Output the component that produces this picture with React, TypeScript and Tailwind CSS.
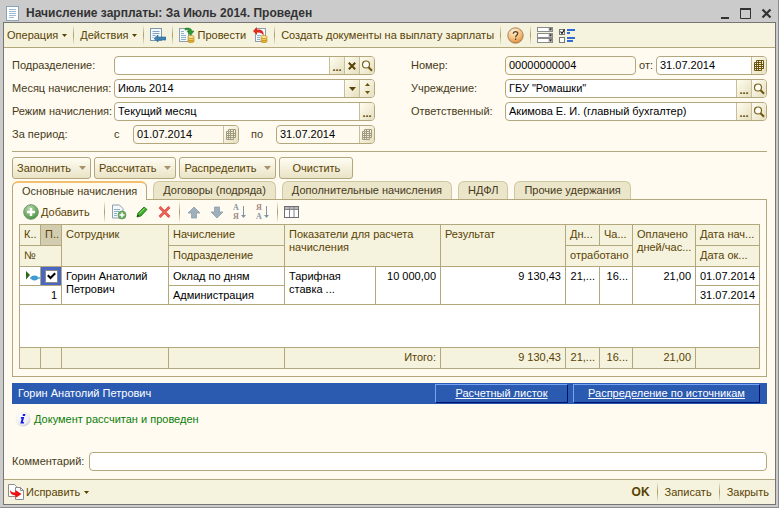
import { ReactNode, useState } from 'react';
import { clsx } from 'clsx';

/* ---------- icons ---------- */

const TitleIcon = () => (
  <svg width="13" height="15" viewBox="0 0 13 15" aria-hidden="true">
    <rect x=".5" y=".5" width="12" height="14" fill="#fff" stroke="#8aa3b5" />
    <path d="M3 3.5h7M3 5.5h7M3 7.5h7M3 9.5h7M3 11.5h5" stroke="#9dbbd3" />
  </svg>
);

const CaretIcon = () => (
  <svg width="5" height="3" viewBox="0 0 5 3" className="ml-0.5" aria-hidden="true">
    <path d="M0 0h5L2.500 3z" fill="#594304" />
  </svg>
);

const DropIcon = ({ light = false }: { light?: boolean }) => (
  <svg width="7" height="4" viewBox="0 0 7 4" aria-hidden="true">
    <path d="M0 0h7L3.500 4z" fill={light ? '#a8926c' : '#594304'} />
  </svg>
);

const GoToIcon = () => (
  <svg width="16" height="16" viewBox="0 0 16 16" aria-hidden="true">
    <rect x=".5" y="1.500" width="11" height="12" fill="#f4f8fb" stroke="#7d97a8" />
    <path d="M2.500 4.500h7M2.500 6.500h7M2.500 8.500h3M2.500 10.500h1" stroke="#7fa5c4" />
    <path d="M4 11.500l4-3.500v2h8v3H8v2z" fill="#3f83b5" stroke="#2b648f" strokeWidth=".6" />
  </svg>
);

const Coins = () => (
  <g stroke="#b07a10" strokeWidth=".6">
    <ellipse cx="12" cy="14" rx="3.200" ry="1.600" fill="#e8b53a" />
    <ellipse cx="12" cy="12" rx="3.200" ry="1.600" fill="#f5cf5e" />
    <ellipse cx="12" cy="10" rx="3.200" ry="1.600" fill="#fde48c" />
  </g>
);

const PostIcon = () => (
  <svg width="16" height="16" viewBox="0 0 16 16" aria-hidden="true">
    <rect x=".5" y="1.500" width="9" height="13" fill="#f4f8fb" stroke="#8aa0ae" />
    <path d="M2 4.500h3M2 6.500h3M2 8.500h5M2 10.500h5M2 12.500h5" stroke="#8fb0ca" />
    <path d="M6 1.500c3-1 6.500-.5 6.800 2.500h2.200l-3.500 4.500L8 4h2.200c-.3-1.300-2-1.600-4.200-1z" fill="#2d9a2d" stroke="#17701b" strokeWidth=".5" />
    <Coins />
  </svg>
);

const UnpostIcon = () => (
  <svg width="16" height="16" viewBox="0 0 16 16" aria-hidden="true">
    <rect x="3.500" y="1.500" width="10" height="13" fill="#f4f8fb" stroke="#8aa0ae" />
    <path d="M5 8.500h4M5 10.500h3M5 12.500h3" stroke="#8fb0ca" />
    <path d="M1 4l4-4v2.500c5-.3 7 1.500 6.500 6.500-.8-2.500-2.500-3.700-6.500-3.500V8z" fill="#e02a1c" />
    <Coins />
  </svg>
);

const HelpIcon = () => (
  <svg width="17" height="17" viewBox="0 0 17 17" aria-hidden="true">
    <defs>
      <radialGradient id="help" cx=".4" cy=".25" r=".8">
        <stop offset="0" stopColor="#fff3dc" />
        <stop offset=".6" stopColor="#f5bd78" />
        <stop offset="1" stopColor="#d98432" />
      </radialGradient>
    </defs>
    <circle cx="8.500" cy="8.500" r="7.700" fill="url(#help)" stroke="#9b7c5a" strokeWidth=".9" />
    <path d="M6.300 6.800c0-2.800 4.500-2.800 4.500-.2 0 1.700-2.200 1.700-2.200 3.600M8.600 11.500v1.500" fill="none" stroke="#5e4326" strokeWidth="1.300" />
  </svg>
);

const FieldsIcon = () => (
  <svg width="16" height="16" viewBox="0 0 16 16" aria-hidden="true">
    {[0, 6, 11].map(y => (
      <g key={y}>
        <rect x=".5" y={y + 0.5} width="15" height="4" fill="#fff" stroke="#8a8a8a" />
        <path d={`M11.500 ${y + 1}h3.500v3h-3.500z`} fill="#b5b5b5" />
        <path d={`M12 ${y + 1.5}h3l-1.500 2z`} fill="#222" />
      </g>
    ))}
  </svg>
);

const SettingsListIcon = () => (
  <svg width="17" height="15" viewBox="0 0 17 15" aria-hidden="true">
    <rect x=".5" y="1.500" width="5" height="5" fill="#fff" stroke="#777" />
    <path d="M1.500 3.500l1.500 2 2.500-4" fill="none" stroke="#111" strokeWidth="1.200" />
    <rect x=".5" y="9.500" width="5" height="5" fill="#fff" stroke="#777" />
    <path d="M8 2h8M8 5h3M8 10h8M8 13h6" stroke="#2f6bd6" strokeWidth="2" />
  </svg>
);

const SearchIcon = () => (
  <svg width="12" height="12" viewBox="0 0 12 12" aria-hidden="true">
    <circle cx="5" cy="4.500" r="3.500" fill="#fffdf5" stroke="#7a6420" strokeWidth="1.200" />
    <path d="M7.500 7.200L11 10.700" stroke="#6b540c" strokeWidth="2" />
  </svg>
);

const ClearIcon = () => (
  <svg width="8" height="8" viewBox="0 0 8 8" aria-hidden="true">
    <path d="M.8.8l6.400 6.400M7.200.8L.8 7.200" stroke="#594304" strokeWidth="2" />
  </svg>
);

const CalendarIcon = ({ muted = false }: { muted?: boolean }) => (
  <svg width="10" height="11" viewBox="0 0 10 11" aria-hidden="true">
    <path d="M2.500.5h7v8h-2v2h-7v-8h2zM2.500 2.500h5v6M.5 4.500h9M.5 6.500h9M.5 8.500h7M2.500 2.500v8M4.500.5v10M7.500.5v8" fill="none" stroke={muted ? '#a09a80' : '#6b540c'} />
  </svg>
);

const SpinIcon = () => (
  <svg width="5" height="11" viewBox="0 0 5 11" aria-hidden="true">
    <path d="M0 3l2.500-3L5 3zM0 8h5l-2.500 3z" fill="#6b540c" />
  </svg>
);

const AddIcon = () => (
  <svg width="16" height="16" viewBox="0 0 16 16" aria-hidden="true">
    <defs>
      <radialGradient id="add" cx=".4" cy=".25" r=".8">
        <stop offset="0" stopColor="#b7d9ad" />
        <stop offset="1" stopColor="#478f3e" />
      </radialGradient>
    </defs>
    <circle cx="8" cy="8" r="7.300" fill="url(#add)" stroke="#72966c" />
    <path d="M8 4v8M4 8h8" stroke="#fff" strokeWidth="2.400" />
  </svg>
);

const CopyRowIcon = () => (
  <svg width="16" height="16" viewBox="0 0 16 16" aria-hidden="true">
    <path d="M1.500 1h7l3.500 3.500v9.500H1.500z" fill="#f4f8fb" stroke="#8aa0ae" />
    <path d="M3 5.500h6M3 7.500h5M3 9.500h3M3 11.500h3" stroke="#8fb0ca" />
    <circle cx="11" cy="11" r="4" fill="#6fab64" stroke="#4a8a41" strokeWidth=".6" />
    <path d="M11 8.500v5M8.500 11h5" stroke="#fff" strokeWidth="1.500" />
  </svg>
);

const EditIcon = () => (
  <svg width="12" height="12" viewBox="0 0 12 12" aria-hidden="true">
    <path d="M1 11l1-4L8 1l3 2.500-6 6.500z" fill="#3fae2a" stroke="#1d6d14" strokeWidth=".8" />
    <path d="M3.500 7.500l5-5" stroke="#9be07c" />
    <path d="M1 11l.6-2.500L3.500 10z" fill="#123f0c" />
  </svg>
);

const DeleteIcon = () => (
  <svg width="13" height="12" viewBox="0 0 13 12" aria-hidden="true">
    <path d="M1.500 1l10 10M11.500 1l-10 10" stroke="#e0453a" strokeWidth="2.600" />
    <path d="M1.500 1l10 10M11.500 1l-10 10" stroke="#f58a7c" strokeWidth=".8" />
  </svg>
);

const ArrowIcon = ({ down = false }: { down?: boolean }) => (
  <svg width="14" height="13" viewBox="0 0 14 13" aria-hidden="true">
    <path d={down ? 'M4.500 1h5v5h3.500L7 12 1 6h3.500z' : 'M4.500 12h5V7H13L7 1 1 7h3.500z'} fill="#9fafbc" stroke="#8b9dac" strokeWidth=".8" />
  </svg>
);

const SortIcon = ({ desc = false }: { desc?: boolean }) => (
  <svg width="15" height="16" viewBox="0 0 15 16" aria-hidden="true">
    <g fontFamily="Liberation Serif, serif" fontSize="8" fontWeight="bold">
      <text x="1" y="6" fill={desc ? '#a08888' : '#8295a5'}>{desc ? 'Я' : 'А'}</text>
      <text x="1" y="15" fill={desc ? '#8295a5' : '#a08888'}>{desc ? 'А' : 'Я'}</text>
    </g>
    <path d="M11.500 2v10" stroke="#8295a5" />
    <path d="M9 11h5l-2.500 3z" fill="#8295a5" />
  </svg>
);

const GridIcon = () => (
  <svg width="15" height="12" viewBox="0 0 15 12" aria-hidden="true">
    <rect x=".5" y=".5" width="14" height="11" fill="#fff" stroke="#6f6f72" />
    <path d="M1 1h13v2H1z" fill="#b5b5ba" />
    <path d="M5.500 1v10M10 1v10M1 3.500h13" stroke="#85858a" />
  </svg>
);

const RowMarkerIcon = () => (
  <svg width="15" height="11" viewBox="0 0 15 11" aria-hidden="true">
    <path d="M1 0l4 4-4 4.500z" fill="#2f6a16" />
    <path d="M5 7h10" stroke="#5aa8d8" strokeWidth="1.500" />
    <ellipse cx="9.500" cy="7" rx="3.500" ry="2.400" fill="#3f9bd4" />
  </svg>
);

const InfoIcon = () => (
  <svg width="16" height="16" viewBox="0 0 16 16" aria-hidden="true">
    <defs>
      <radialGradient id="info" cx=".4" cy=".35" r=".7">
        <stop offset="0" stopColor="#fff" />
        <stop offset=".7" stopColor="#eeeef2" />
        <stop offset="1" stopColor="#c9c9d2" />
      </radialGradient>
    </defs>
    <circle cx="8" cy="8" r="7.500" fill="url(#info)" />
    <path d="M8 3h2.500l-.6 2H7.500zM6 6h3.300l-1.500 5h1.300l-.3 1.500H5.300l1.400-5H5.700z" fill="#1b1bea" />
  </svg>
);

const FixIcon = () => (
  <svg width="16" height="16" viewBox="0 0 16 16" aria-hidden="true">
    <path d="M.5.500h6l2 2v10h-8z" fill="#fff" stroke="#8c8c8c" />
    <path d="M7.500 3.500h5l3 3v9h-8z" fill="#fff" stroke="#8c8c8c" />
    <path d="M12.500 3.500v3h3" fill="none" stroke="#8c8c8c" />
    <path d="M2 6c1 2 3 2.500 5.500 2.500V6l6 4-6 4v-2.700C4 11.300 2 9.500 2 6z" fill="#ee1111" />
  </svg>
);

/* ---------- controls ---------- */

const Sep = () => <span className="w-px h-5 shrink-0 bg-gradient-to-b from-[#f5f2dd] via-[#a89b6c] to-[#f5f2dd]" />;

const ToolButton = ({ children, title }: { children: ReactNode; title?: string }) => (
  <button type="button" title={title} className="flex items-center justify-center gap-0.5 h-6 min-w-4 shrink-0 whitespace-nowrap text-[#594304]">
    {children}
  </button>
);

const FieldButton = ({ children, title, disabled }: { children: ReactNode; title: string; disabled?: boolean }) => (
  <button
    type="button"
    title={title}
    disabled={disabled}
    className="w-[15px] shrink-0 flex items-center justify-center border-l border-[#c8bf98] bg-gradient-to-br from-[#fffdf2] to-[#e6dfbd] text-[#594304]"
  >
    {children}
  </button>
);

const SelectButton = () => (
  <FieldButton title="Выбрать"><span className="pt-1 font-bold">...</span></FieldButton>
);

type FieldProps = { id: string; value?: string; muted?: boolean; className?: string; children?: ReactNode };

const Field = ({ id, value = '', muted, className, children }: FieldProps) => (
  <div className={clsx('flex h-[19px] overflow-hidden rounded border border-[#b3a77d]', muted ? 'bg-[#fffaf0]' : 'bg-white', className)}>
    <input id={id} defaultValue={value} readOnly={muted} className="flex-1 min-w-0 w-full pl-[3px] bg-transparent text-black outline-none" />
    {children}
  </div>
);

const MenuButton = ({ children, menu = true }: { children: ReactNode; menu?: boolean }) => (
  <button
    type="button"
    className={clsx(
      'h-[22px] flex items-center rounded-[3px] border border-[#b3a77d] bg-gradient-to-b from-[#fffdf3] to-[#e9e3c5] text-[#594304]',
      menu ? 'gap-2 px-1' : 'px-3'
    )}
  >
    {children}
    {menu && <DropIcon light />}
  </button>
);

const tabs = ['Основные начисления', 'Договоры (подряда)', 'Дополнительные начисления', 'НДФЛ', 'Прочие удержания'];

const cell = 'border border-[#b3a77d] px-1 align-top font-normal';
const head = clsx(cell, 'text-left text-[#594304] pt-[3px]');
const data = clsx(cell, 'text-black pt-[3px]');
const foot = clsx(cell, 'text-right text-[#594304] pt-[3px]');

const AccrualTable = () => (
  <table className="w-full table-fixed border-collapse bg-white leading-[13px]">
    <colgroup>
      <col className="w-[21px]" />
      <col className="w-[21px]" />
      <col className="w-[107px]" />
      <col className="w-[116px]" />
      <col className="w-[91px]" />
      <col className="w-[65px]" />
      <col />
      <col className="w-[34px]" />
      <col className="w-[33px]" />
      <col className="w-[63px]" />
      <col className="w-[64px]" />
    </colgroup>
    <thead className="bg-[#f5f2dd]">
      <tr className="h-[21px]">
        <th className={head}>К..</th>
        <th className={clsx(head, 'bg-[#d2ccb0]')}>П..</th>
        <th className={head} rowSpan={2}>Сотрудник</th>
        <th className={head}>Начисление</th>
        <th className={head} colSpan={2} rowSpan={2}>Показатели для расчета начисления</th>
        <th className={head} rowSpan={2}>Результат</th>
        <th className={head}>Дн...</th>
        <th className={head}>Ча...</th>
        <th className={clsx(head, 'whitespace-nowrap')} rowSpan={2}>Оплачено<br />дней/час...</th>
        <th className={clsx(head, 'whitespace-nowrap')}>Дата нач...</th>
      </tr>
      <tr className="h-[21px]">
        <th className={head} colSpan={2}>№</th>
        <th className={head}>Подразделение</th>
        <th className={head} colSpan={2}>отработано</th>
        <th className={clsx(head, 'whitespace-nowrap')}>Дата ок...</th>
      </tr>
    </thead>
    <tbody>
      <tr className="h-[19px]">
        <td className="border border-[#b3a77d]"><div className="flex justify-end"><RowMarkerIcon /></div></td>
        <td className="border border-[#b3a77d] bg-[#4a66c4]">
          <div className="grid place-items-center">
            <input type="checkbox" defaultChecked aria-label="Строка 1" className="peer appearance-none col-start-1 row-start-1 size-[13px] border border-[#8a8a8a] bg-white" />
            <svg width="9" height="8" viewBox="0 0 9 8" aria-hidden="true" className="col-start-1 row-start-1 pointer-events-none invisible peer-checked:visible">
              <path d="M.8 3.200l2.700 2.800L8.200 1.200" fill="none" stroke="#000" strokeWidth="2" />
            </svg>
          </div>
        </td>
        <td className={data} rowSpan={2}>Горин Анатолий Петрович</td>
        <td className={data}>Оклад по дням</td>
        <td className={data} rowSpan={2}>Тарифная<br />ставка ...</td>
        <td className={clsx(data, 'text-right')} rowSpan={2}>10 000,00</td>
        <td className={clsx(data, 'text-right')} rowSpan={2}>9 130,43</td>
        <td className={clsx(data, 'text-right')} rowSpan={2}>21,...</td>
        <td className={clsx(data, 'text-right')} rowSpan={2}>16...</td>
        <td className={clsx(data, 'text-right')} rowSpan={2}>21,00</td>
        <td className={data}>01.07.2014</td>
      </tr>
      <tr className="h-[19px]">
        <td className={clsx(data, 'text-right')} colSpan={2}>1</td>
        <td className={data}>Администрация</td>
        <td className={data}>31.07.2014</td>
      </tr>
      <tr className="h-[43px]">
        <td className={cell} colSpan={11} />
      </tr>
    </tbody>
    <tfoot className="bg-[#f5f2dd]">
      <tr className="h-[21px]">
        <td className={foot} />
        <td className={foot} />
        <td className={foot} />
        <td className={foot} />
        <td className={foot} colSpan={2}>Итого:</td>
        <td className={foot}>9 130,43</td>
        <td className={foot}>21,...</td>
        <td className={foot}>16...</td>
        <td className={foot}>21,00</td>
        <td className={foot} />
      </tr>
    </tfoot>
  </table>
);

const barLink = 'flex items-center justify-center h-[19px] border border-t-[#78a4f4] border-l-[#78a4f4] border-r-[#00106c] border-b-[#00106c] underline';

export default function App() {
  const [activeTab, setActiveTab] = useState(0);

  return (
    <div className="min-h-screen flex flex-col bg-[#cbcbcb] border-b border-r border-[#8c8c8c] pl-[3px] pr-[2px] pb-[2px] font-['Liberation_Sans',Arial,sans-serif] text-[11px] leading-[13px] text-[#463a20]">
      {/* Title bar */}
      <header className="h-[22px] flex items-center pt-1 pl-[3px] pr-1 text-[#333]">
        <TitleIcon />
        <h1 className="flex-1 pl-[7px] text-xs font-bold">Начисление зарплаты: За Июль 2014. Проведен</h1>
        <div className="flex items-center gap-2.5">
          <button type="button" title="Свернуть">
            <svg width="9" height="11" viewBox="0 0 9 11"><path d="M0 10h8" stroke="#333" strokeWidth="2" /></svg>
          </button>
          <button type="button" title="Развернуть">
            <svg width="11" height="11" viewBox="0 0 11 11"><path d="M.5 1h10v9.500H.5z" fill="none" stroke="#333" /><path d="M0 1h11" stroke="#333" strokeWidth="2" /></svg>
          </button>
          <button type="button" title="Закрыть">
            <svg width="11" height="11" viewBox="0 0 11 11"><path d="M1.500 1.500l8 8M9.500 1.500l-8 8" stroke="#333" strokeWidth="2.200" /></svg>
          </button>
        </div>
      </header>

      <div className="flex-1 flex flex-col border border-[#757575] bg-[#fffbf0]">
        {/* Main toolbar */}
        <div className="h-[25px] flex items-center gap-[6px] pl-[3px] bg-[#f5f2dd] border-b border-[#b3a77d]">
          <ToolButton>Операция <CaretIcon /></ToolButton>
          <Sep />
          <ToolButton>Действия <CaretIcon /></ToolButton>
          <Sep />
          <ToolButton title="Перейти"><GoToIcon /></ToolButton>
          <Sep />
          <ToolButton><PostIcon />Провести</ToolButton>
          <ToolButton title="Отмена проведения"><UnpostIcon /></ToolButton>
          <Sep />
          <ToolButton>Создать документы на выплату зарплаты</ToolButton>
          <Sep />
          <ToolButton title="Справка"><HelpIcon /></ToolButton>
          <Sep />
          <ToolButton title="Реквизиты"><FieldsIcon /></ToolButton>
          <ToolButton title="Настройка списка"><SettingsListIcon /></ToolButton>
        </div>

        <main className="px-2 pt-2">
          {/* Document header fields */}
          <div className="grid grid-cols-[363fr_356fr] gap-x-9 pb-[7px] border-b border-[#b3a77d]">
            <div className="grid grid-cols-[102px_1fr] items-center gap-y-1">
              <label htmlFor="dept">Подразделение:</label>
              <Field id="dept">
                <SelectButton />
                <FieldButton title="Очистить"><ClearIcon /></FieldButton>
                <FieldButton title="Открыть"><SearchIcon /></FieldButton>
              </Field>
              <label htmlFor="month">Месяц начисления:</label>
              <Field id="month" value="Июль 2014">
                <FieldButton title="Выбрать"><DropIcon /></FieldButton>
                <FieldButton title="Изменить"><SpinIcon /></FieldButton>
              </Field>
              <label htmlFor="mode">Режим начисления:</label>
              <Field id="mode" value="Текущий месяц">
                <SelectButton />
              </Field>
              <span>За период:</span>
              <div className="flex items-center">
                <label htmlFor="from" className="w-[19px]">с</label>
                <Field id="from" value="01.07.2014" muted className="w-[106px]">
                  <FieldButton title="Календарь" disabled><CalendarIcon muted /></FieldButton>
                </Field>
                <label htmlFor="to" className="w-[37px] pl-3">по</label>
                <Field id="to" value="31.07.2014" muted className="flex-1">
                  <FieldButton title="Календарь" disabled><CalendarIcon muted /></FieldButton>
                </Field>
              </div>
            </div>
            <div className="grid grid-cols-[94px_1fr] items-center content-start gap-y-1">
              <label htmlFor="number">Номер:</label>
              <div className="flex items-center">
                <Field id="number" value="00000000004" muted className="flex-1" />
                <label htmlFor="date" className="px-[3px]">от:</label>
                <Field id="date" value="31.07.2014" className="w-[111px]">
                  <FieldButton title="Календарь"><CalendarIcon /></FieldButton>
                </Field>
              </div>
              <label htmlFor="org">Учреждение:</label>
              <Field id="org" value='ГБУ "Ромашки"'>
                <SelectButton />
                <FieldButton title="Открыть"><SearchIcon /></FieldButton>
              </Field>
              <label htmlFor="resp">Ответственный:</label>
              <Field id="resp" value="Акимова Е. И. (главный бухгалтер)">
                <SelectButton />
                <FieldButton title="Открыть"><SearchIcon /></FieldButton>
              </Field>
            </div>
          </div>

          <div className="flex gap-[3px] pt-[5px]">
            <MenuButton>Заполнить</MenuButton>
            <MenuButton>Рассчитать</MenuButton>
            <MenuButton>Распределить</MenuButton>
            <MenuButton menu={false}>Очистить</MenuButton>
          </div>

          {/* Tabs */}
          <div role="tablist" className="flex items-end gap-[6px] pt-[2px]">
            {tabs.map((tab, i) => (
              <button
                key={tab}
                type="button"
                role="tab"
                aria-selected={activeTab === i}
                onClick={() => setActiveTab(i)}
                className={clsx(
                  'px-[9px] rounded-t-md border border-b-0 text-[#463a20]',
                  activeTab === i ? 'h-[19px] -mb-px z-10 border-[#b3a77d] border-t-2 border-t-[#f0c070] bg-[#fffbf0]' : 'h-[18px] border-[#cfc6a2] bg-[#ebe5ca]'
                )}
              >
                {tab}
              </button>
            ))}
          </div>

          <section className="border border-[#b3a77d] px-1.5 pb-[7px]">
            <div className="h-6 flex items-center gap-[6px] pl-1">
              <ToolButton><AddIcon /><span className="pr-2"><u>Д</u>обавить</span></ToolButton>
              <Sep />
              <div className="flex gap-[7px]">
                <ToolButton title="Скопировать"><CopyRowIcon /></ToolButton>
                <ToolButton title="Изменить"><EditIcon /></ToolButton>
                <ToolButton title="Удалить"><DeleteIcon /></ToolButton>
              </div>
              <Sep />
              <div className="flex gap-[7px]">
                <ToolButton title="Вверх"><ArrowIcon /></ToolButton>
                <ToolButton title="Вниз"><ArrowIcon down /></ToolButton>
                <ToolButton title="По возрастанию"><SortIcon /></ToolButton>
                <ToolButton title="По убыванию"><SortIcon desc /></ToolButton>
              </div>
              <Sep />
              <ToolButton title="Колонки"><GridIcon /></ToolButton>
            </div>
            <AccrualTable />
          </section>

          {/* Employee bar */}
          <div className="mt-[6px] h-[21px] flex items-center gap-[5px] pl-[6px] pr-[7px] bg-[#2b5bb1] text-white">
            <span className="flex-1">Горин Анатолий Петрович</span>
            <a href="#payslip" className={clsx(barLink, 'w-[133px]')}>Расчетный листок</a>
            <a href="#sources" className={clsx(barLink, 'w-[187px]')}>Распределение по источникам</a>
          </div>

          <p className="flex items-center gap-[3px] pl-[3px] pt-[7px] text-[#0a7d0a]"><InfoIcon />Документ рассчитан и проведен</p>
        </main>

        <div className="mt-auto px-2 pb-2 flex items-center">
          <label htmlFor="comment" className="w-[77px]">Комментарий:</label>
          <Field id="comment" className="flex-1" />
        </div>

        <footer className="h-[25px] flex items-center gap-[7px] pl-1 pr-[6px] bg-[#f5f2dd] border-t border-[#b3a77d]">
          <ToolButton><FixIcon />Исправить <CaretIcon /></ToolButton>
          <span className="flex-1" />
          <button type="submit" className="text-xs font-bold text-[#594304]">OK</button>
          <Sep />
          <ToolButton>Записать</ToolButton>
          <Sep />
          <ToolButton>Закрыть</ToolButton>
        </footer>
      </div>
    </div>
  );
}
